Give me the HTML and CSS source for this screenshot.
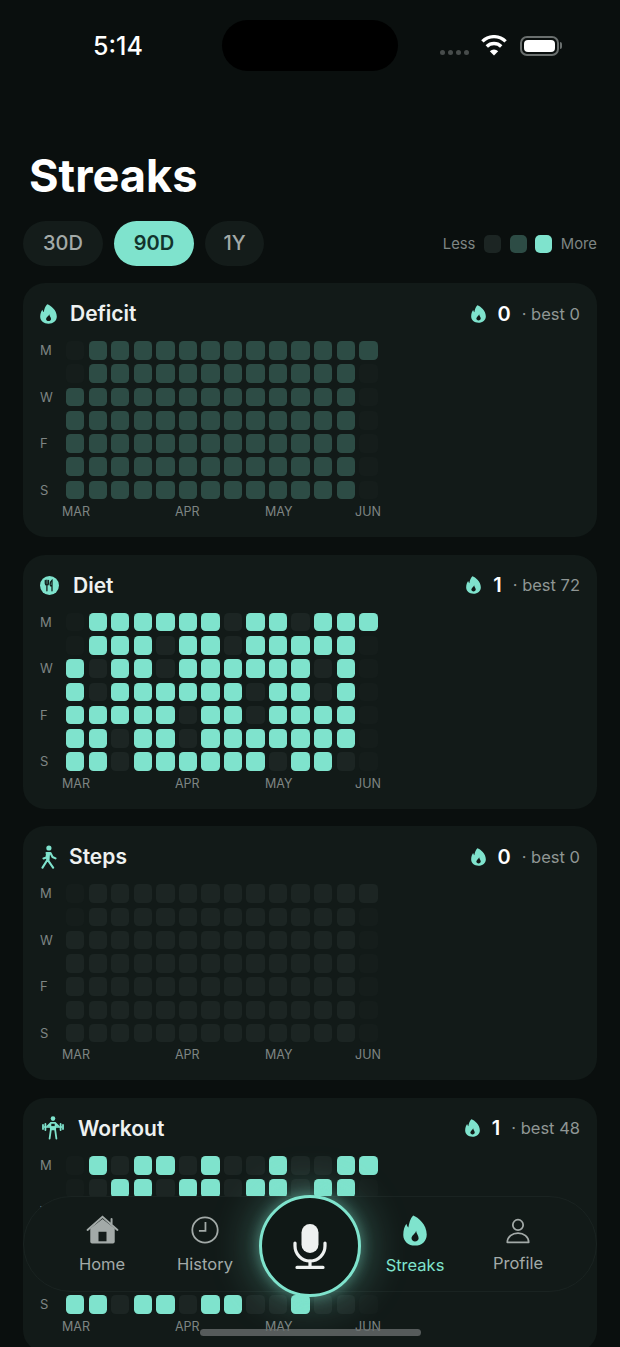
FILE: index.html
```html
<!DOCTYPE html>
<html lang="en">
<head>
    <meta charset="UTF-8">
    <meta name="viewport" content="width=device-width, initial-scale=1.0">
    <title>Streaks</title>
    <link rel="stylesheet" href="styles.css">
</head>
<body>
    <svg class="sprites" width="0" height="0">
        <symbol id="flame" viewBox="0 0 18 24" preserveAspectRatio="none">
            <path fill-rule="evenodd" d="M7.6 0.3C11.4 1.6 17.8 7.4 17.8 15C17.8 20.2 14 23.7 9 23.7C4 23.7 0.2 20.2 0.2 15.4C0.2 11.6 1.2 8.6 2.6 6.8C2.9 8.2 3.3 9 4 9.6C4.6 6 5.4 2.8 7.6 0.3ZM9.8 12.2C9.6 14.4 6.4 15.6 6.4 18C6.4 19.5 7.6 20.5 9 20.5C10.5 20.5 11.7 19.5 11.7 18C11.7 15.6 10 14.6 9.8 12.2Z"/>
        </symbol>
    </svg>

    <header class="status-bar">
        <span class="status-time">5:14</span>
        <div class="island"></div>
        <div class="status-icons">
            <div class="signal"><i></i><i></i><i></i><i></i></div>
            <svg class="wifi" viewBox="0 0 28 21" width="28" height="21">
                <path d="M14 20.6l-4.2 -4.4a6 6 0 0 1 8.4 0z" fill="#fff"/>
                <path d="M6.8 11.4a10.4 10.4 0 0 1 14.4 0M2.4 6.4a16.6 16.6 0 0 1 23.2 0" fill="none" stroke="#fff" stroke-width="3.4"/>
            </svg>
            <div class="battery"><div class="battery-fill"></div></div>
            <div class="battery-cap"></div>
        </div>
    </header>

    <h1 class="page-title">Streaks</h1>

    <div class="toolbar">
        <div class="ranges">
            <span class="range">30D</span>
            <span class="range range-active">90D</span>
            <span class="range range-short">1Y</span>
        </div>
        <div class="legend">
            <span>Less</span>
            <i class="swatch cell-off"></i>
            <i class="swatch cell-mid"></i>
            <i class="swatch cell-on"></i>
            <span>More</span>
        </div>
    </div>

    <main class="cards">
        <section class="card">
            <div class="card-head">
                <svg class="card-icon card-icon-flame" width="17" height="20" fill="#7fe3cd"><use href="#flame"/></svg>
                <h2 class="card-title">Deficit</h2>
                <div class="card-stats">
                    <svg class="stat-flame" width="15" height="18" fill="#7fe3cd"><use href="#flame"/></svg>
                    <b class="stat-count">0</b>
                    <span class="stat-best">· best 0</span>
                </div>
            </div>
            <div class="heatmap">
                <div class="days"><span>M</span><span></span><span>W</span><span></span><span>F</span><span></span><span>S</span></div>
                <div class="cells" data-rows="dmmmmmmmmmmmmm,dmmmmmmmmmmmmd,mmmmmmmmmmmmmd,mmmmmmmmmmmmmd,mmmmmmmmmmmmmd,mmmmmmmmmmmmmd,mmmmmmmmmmmmmd"></div>
            </div>
            <div class="months"><span>MAR</span><span>APR</span><span>MAY</span><span>JUN</span></div>
        </section>

        <section class="card">
            <div class="card-head">
                <svg class="card-icon" width="19" height="19" viewBox="0 0 19 19">
                    <circle cx="9.5" cy="9.5" r="9.5" fill="#7fe3cd"/>
                    <path d="M6.9 4.2v10.6M5.3 4.4v3.2q0 1.6 1.6 1.6t1.6-1.6V4.4M12 14.8V4.2q-1.9 1.2-1.9 4.4 0 1.6 1.9 1.8" fill="none" stroke="#12201d" stroke-width="1.3" stroke-linecap="round"/>
                </svg>
                <h2 class="card-title card-title-diet">Diet</h2>
                <div class="card-stats">
                    <svg class="stat-flame" width="15" height="18" fill="#7fe3cd"><use href="#flame"/></svg>
                    <b class="stat-count">1</b>
                    <span class="stat-best">· best 72</span>
                </div>
            </div>
            <div class="heatmap">
                <div class="days"><span>M</span><span></span><span>W</span><span></span><span>F</span><span></span><span>S</span></div>
                <div class="cells" data-rows="dooooooxooxooo,dooo xooxoooood,oxooxooooooxod,oxooooooxooxod,oooooxooxooood,ooxooxoooooood,ooxooooooxooxd"></div>
            </div>
            <div class="months"><span>MAR</span><span>APR</span><span>MAY</span><span>JUN</span></div>
        </section>

        <section class="card">
            <div class="card-head">
                <svg class="card-icon" width="17" height="24" viewBox="0 0 16 24">
                    <circle cx="8.4" cy="3" r="2.6" fill="#7fe3cd"/>
                    <path d="M6 8h4l2 4 3 1.4M6.6 8.4L6 12.5l-3 1M7.2 8l-.4 7-4.8 7.6M7.2 14.8l5.4 7.8" fill="none" stroke="#7fe3cd" stroke-width="2.1" stroke-linecap="round" stroke-linejoin="round"/>
                    <path d="M6.4 7.6h3.2l-.6 8H6z" fill="#7fe3cd"/>
                </svg>
                <h2 class="card-title">Steps</h2>
                <div class="card-stats">
                    <svg class="stat-flame" width="15" height="18" fill="#7fe3cd"><use href="#flame"/></svg>
                    <b class="stat-count">0</b>
                    <span class="stat-best">· best 0</span>
                </div>
            </div>
            <div class="heatmap">
                <div class="days"><span>M</span><span></span><span>W</span><span></span><span>F</span><span></span><span>S</span></div>
                <div class="cells" data-rows="dxxxxxxxxxxxxx,dxxxxxxxxxxxxd,xxxxxxxxxxxxxd,xxxxxxxxxxxxxd,xxxxxxxxxxxxxd,xxxxxxxxxxxxxd,xxxxxxxxxxxxxd"></div>
            </div>
            <div class="months"><span>MAR</span><span>APR</span><span>MAY</span><span>JUN</span></div>
        </section>

        <section class="card">
            <div class="card-head">
                <svg class="card-icon card-icon-workout" width="22" height="24" viewBox="0 0 22 24">
                    <circle cx="11" cy="2.6" r="2.3" fill="#7fe3cd"/>
                    <path d="M2 11h18" stroke="#7fe3cd" stroke-width="1.6"/>
                    <path d="M1 9v4M3.4 8v6M18.6 8v6M21 9v4" stroke="#7fe3cd" stroke-width="1.8" stroke-linecap="round"/>
                    <path d="M5 10.5L9 6.6h4l4 3.9M8.6 7v6.6h4.8V7z" fill="#7fe3cd" stroke="#7fe3cd" stroke-width="1.4" stroke-linejoin="round"/>
                    <path d="M8.8 14L7.6 22.6M13.2 14l1.2 8.6" fill="none" stroke="#7fe3cd" stroke-width="1.8" stroke-linecap="round"/>
                </svg>
                <h2 class="card-title">Workout</h2>
                <div class="card-stats">
                    <svg class="stat-flame" width="15" height="18" fill="#7fe3cd"><use href="#flame"/></svg>
                    <b class="stat-count">1</b>
                    <span class="stat-best">· best 48</span>
                </div>
            </div>
            <div class="heatmap">
                <div class="days"><span>M</span><span></span><span>W</span><span></span><span>F</span><span></span><span>S</span></div>
                <div class="cells" data-rows="doxooxoxxoxxoo,dxooxooxooxood,xoxoxxoxoxoxxd,oxxooxxoxxoxxd,xooxoxxooxxoxd,oxoxxoxoxoxxxd,ooxooxooxxoxxd"></div>
            </div>
            <div class="months"><span>MAR</span><span>APR</span><span>MAY</span><span>JUN</span></div>
        </section>
    </main>

    <nav class="tabbar">
        <a class="tab tab-home">
            <svg width="33" height="29" viewBox="0 0 36 32">
                <path d="M4.5 15L18 4.5 31.5 15v14.5a2 2 0 0 1-2 2h-23a2 2 0 0 1-2-2z" fill="#a3aaa8"/>
                <path d="M1.5 16.5L18 2l16.5 14.5M28 4.5v6" fill="none" stroke="#a3aaa8" stroke-width="2.2" stroke-linecap="round"/>
                <rect x="13.6" y="18.5" width="8.8" height="10.5" fill="#131b19"/>
            </svg>
            <span>Home</span>
        </a>
        <a class="tab tab-history">
            <svg width="28" height="28" viewBox="0 0 30 30">
                <circle cx="15" cy="15" r="13.6" fill="none" stroke="#a3aaa8" stroke-width="1.9"/>
                <path d="M15.5 6.5v9.5H8.5" fill="none" stroke="#a3aaa8" stroke-width="1.9"/>
            </svg>
            <span>History</span>
        </a>
        <div class="mic-button">
            <svg width="34" height="46" viewBox="0 0 34 46">
                <rect x="8.5" y="1" width="17" height="29" rx="8.5" fill="#eef1f0"/>
                <path d="M2 20v3a15 15 0 0 0 30 0v-3" fill="none" stroke="#eef1f0" stroke-width="3.2" stroke-linecap="round"/>
                <path d="M17 38v6M4 44.4h26" fill="none" stroke="#eef1f0" stroke-width="3.2" stroke-linecap="round"/>
            </svg>
        </div>
        <a class="tab tab-streaks">
            <svg width="24" height="31" fill="#7fe3cd"><use href="#flame"/></svg>
            <span>Streaks</span>
        </a>
        <a class="tab tab-profile">
            <svg width="24" height="26" viewBox="0 0 26 28">
                <circle cx="13" cy="7.4" r="5.6" fill="none" stroke="#a3aaa8" stroke-width="1.9"/>
                <path d="M1.4 26.2c0-6 5.4-10 11.6-10s11.6 4 11.6 10z" fill="none" stroke="#a3aaa8" stroke-width="1.9" stroke-linejoin="round"/>
            </svg>
            <span>Profile</span>
        </a>
    </nav>

    <div class="home-indicator"></div>

    <script>
        // Build the heatmap cells from each grid's row strings
        const levels = { d: 'cell-none', x: 'cell-off', m: 'cell-mid', o: 'cell-on' };

        document.querySelectorAll('.cells').forEach((grid) => {
            const rows = grid.dataset.rows.replace(/ /g, '').split(',');
            rows.forEach((row) => {
                row.split('').forEach((key) => {
                    const cell = document.createElement('div');
                    cell.className = 'cell ' + levels[key];
                    grid.appendChild(cell);
                });
            });
        });
    </script>
</body>
</html>
```

FILE: styles.css
```css
body {
    margin: 0;
    padding: 0;
    height: 100vh;
    background: #0a0f0e;
    color: #ffffff;
    font-family: Inter, "Liberation Sans", sans-serif;
    overflow: hidden;
    position: relative;
}

.sprites {
    position: absolute;
}

/* Status bar */
.status-bar {
    display: flex;
    align-items: center;
    height: 51px;
    padding-top: 20px;
}

.status-time {
    width: 222px;
    padding-left: 93px;
    box-sizing: border-box;
    font-size: 25px;
    font-weight: 500;
}

.island {
    width: 176px;
    height: 51px;
    background: #000000;
    border-radius: 26px;
}

.status-icons {
    display: flex;
    align-items: center;
    margin-left: 42px;
}

.signal {
    display: flex;
    gap: 3px;
    margin-top: 13px;
    margin-right: 11px;
}

.signal i {
    width: 5px;
    height: 5px;
    background: #474c4b;
    border-radius: 50%;
}

.battery {
    width: 39px;
    height: 20px;
    margin-left: 12px;
    padding: 2px;
    box-sizing: border-box;
    border: 2px solid #6a6f6e;
    border-radius: 7px;
}

.battery-fill {
    height: 100%;
    background: #ffffff;
    border-radius: 4px;
}

.battery-cap {
    width: 2px;
    height: 7px;
    margin-left: 1px;
    background: #6a6f6e;
    border-radius: 0 2px 2px 0;
}

/* Title and filters */
.page-title {
    margin: 77px 0 17px 29px;
    font-size: 45.2px;
    line-height: 56px;
    font-weight: 700;
}

.toolbar {
    display: flex;
    justify-content: space-between;
    align-items: center;
    margin: 0 23px 17px;
}

.ranges {
    display: flex;
    gap: 11px;
}

.range {
    width: 80px;
    height: 45px;
    line-height: 45px;
    text-align: center;
    background: #141c1a;
    border-radius: 23px;
    font-size: 20px;
    font-weight: 500;
    color: #a3aaa8;
}

.range-active {
    background: #7fe3cd;
    color: #12332c;
    font-weight: 600;
}

.range-short {
    width: 59px;
}

.legend {
    display: flex;
    align-items: center;
    gap: 8.6px;
    font-size: 14.8px;
    color: #7e8583;
}

.swatch {
    width: 17px;
    height: 18px;
    border-radius: 5px;
}

/* Streak cards */
.cards {
    display: flex;
    flex-direction: column;
    gap: 17.6px;
    margin: 0 23px;
}

.card {
    flex: none;
    height: 254px;
    box-sizing: border-box;
    padding: 15.5px 17px 0;
    background: #121a18;
    border-radius: 22px;
}

.card-head {
    display: flex;
    align-items: center;
    height: 30px;
    margin-bottom: 12.7px;
}

.card-icon {
    flex: none;
    margin-right: 12px;
}

.card-icon-flame {
    margin-right: 13px;
}

.card-icon-workout {
    margin-left: 2px;
    margin-right: 14px;
}

.card-title {
    margin: 0;
    font-size: 21px;
    font-weight: 600;
    color: #eef1f0;
}

.card-title-diet {
    margin-left: 2px;
}

.card-stats {
    display: flex;
    align-items: center;
    margin-left: auto;
}

.stat-count {
    margin-left: 12px;
    font-size: 20px;
    font-weight: 600;
}

.stat-best {
    margin-left: 11px;
    font-size: 16.5px;
    color: #8f9694;
}

.heatmap {
    display: flex;
}

.days {
    display: grid;
    grid-template-rows: repeat(7, 18.6px);
    row-gap: 4.67px;
    width: 26px;
    font-size: 13px;
    color: #7e8583;
}

.days span {
    line-height: 18px;
}

.cells {
    display: grid;
    grid-template-columns: repeat(14, 18.4px);
    grid-template-rows: repeat(7, 18.6px);
    column-gap: 4.16px;
    row-gap: 4.67px;
}

.cell {
    border-radius: 4.5px;
}

.cell-none {
    background: #151d1b;
}

.cell-off {
    background: #1c2523;
}

.cell-mid {
    background: #2d4c45;
}

.cell-on {
    background: #7fe3cd;
}

.months {
    display: grid;
    grid-template-columns: 113px 90px 90px auto;
    margin: 4px 0 0 22px;
    font-size: 12.5px;
    line-height: 18px;
    color: #7e8583;
}

/* Bottom navigation */
.tabbar {
    position: absolute;
    left: 23px;
    top: 1196px;
    width: 574px;
    height: 96px;
    box-sizing: border-box;
    background: #121a18;
    border: 1px solid #1a2321;
    border-radius: 48px;
}

.tab {
    position: absolute;
    top: 0;
    width: 100px;
    height: 94px;
    display: flex;
    flex-direction: column;
    align-items: center;
    justify-content: flex-end;
    gap: 10px;
    padding-bottom: 17px;
    box-sizing: border-box;
    font-size: 16.5px;
    font-weight: 400;
    color: #a3aaa8;
}

.tab-home {
    left: 28px;
}

.tab-history {
    left: 131px;
}

.tab-streaks {
    left: 341px;
    gap: 9px;
    color: #7fe3cd;
    padding-bottom: 16px;
}

.tab-profile {
    left: 444px;
    gap: 9px;
    padding-bottom: 18px;
}

.mic-button {
    position: absolute;
    left: 235px;
    top: -2px;
    width: 102px;
    height: 102px;
    display: flex;
    align-items: center;
    justify-content: center;
    box-sizing: border-box;
    background: #101816;
    border: 3.5px solid #7fe3cd;
    border-radius: 50%;
    box-shadow: 0 0 14px rgba(127, 227, 205, 0.4), 0 0 48px rgba(127, 227, 205, 0.45);
}

.home-indicator {
    position: absolute;
    left: 200px;
    top: 1329px;
    width: 221px;
    height: 7px;
    background: rgba(110, 114, 113, 0.75);
    border-radius: 4px;
}
```
